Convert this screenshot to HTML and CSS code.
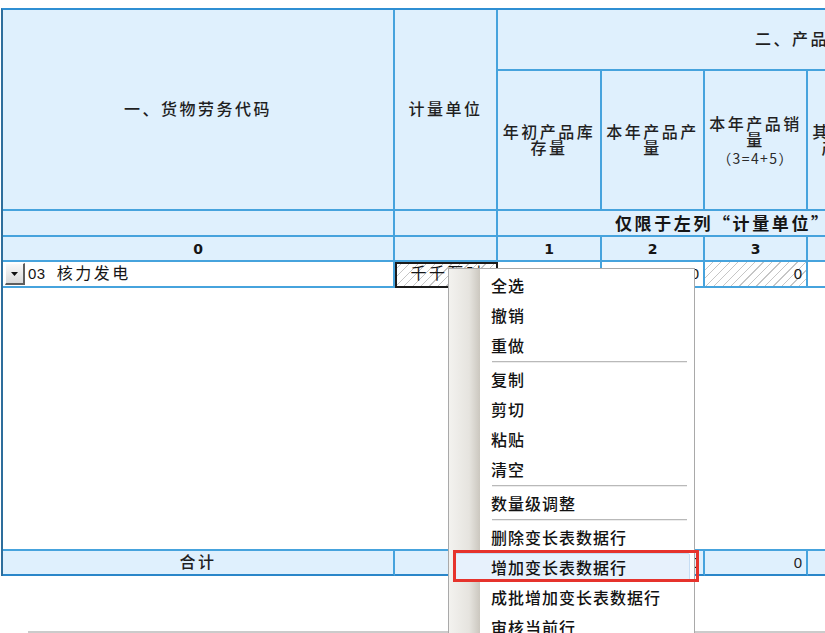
FILE: index.html
```html
<!DOCTYPE html>
<html lang="zh-CN">
<head>
<meta charset="utf-8">
<title>产品产销存情况</title>
<link rel="stylesheet" href="styles.css">
</head>
<body>
<div class="page">
  <div class="sheet">
    <div class="grid">
      <div class="cell hd span-r2 c1">一、货物劳务代码</div>
      <div class="cell hd span-r2 c2">计量单位</div>
      <div class="cell hd group">二、产品产销存情况</div>

      <div class="cell hd sub">年初产品库存量</div>
      <div class="cell hd sub">本年产品产量</div>
      <div class="cell hd sub">本年产品销量<span class="formula">（3=4+5）</span></div>
      <div class="cell hd sub">其中：出口产品销量</div>
      <div class="cell hd sub">年末产品库存量</div>

      <div class="cell hd"></div>
      <div class="cell hd"></div>
      <div class="cell hd note">仅限于左列“计量单位”为“千千瓦时”的填写</div>

      <div class="cell hd num">0</div>
      <div class="cell hd num"></div>
      <div class="cell hd num">1</div>
      <div class="cell hd num">2</div>
      <div class="cell hd num">3</div>
      <div class="cell hd num">4</div>
      <div class="cell hd num">5</div>

      <div class="cell data code">
        <span class="drop"><svg width="7" height="4" viewBox="0 0 7 4"><path d="M0 0H7L3.5 4Z" fill="#111"/></svg></span>
        <span class="code-no">03</span><span class="code-name">核力发电</span>
      </div>
      <div class="cell data hatch selected">千千瓦时</div>
      <div class="cell data val">0</div>
      <div class="cell data val">0</div>
      <div class="cell data val hatch">0</div>
      <div class="cell data val"></div>
      <div class="cell data val"></div>

      <div class="cell blank"></div>

      <div class="cell hd total">合计</div>
      <div class="cell hd total"></div>
      <div class="cell hd total val">0</div>
      <div class="cell hd total val">0</div>
      <div class="cell hd total val">0</div>
      <div class="cell hd total"></div>
      <div class="cell hd total"></div>
    </div>
  </div>
  <div class="foot"></div>

  <div class="menu">
    <div class="item">全选</div>
    <div class="item">撤销</div>
    <div class="item">重做</div>
    <div class="sep"></div>
    <div class="item">复制</div>
    <div class="item">剪切</div>
    <div class="item">粘贴</div>
    <div class="item">清空</div>
    <div class="sep"></div>
    <div class="item">数量级调整</div>
    <div class="sep"></div>
    <div class="item">删除变长表数据行</div>
    <div class="item hot">增加变长表数据行</div>
    <div class="item">成批增加变长表数据行</div>
    <div class="item">审核当前行</div>
  </div>
  <div class="mark"></div>
</div>
</body>
</html>
```

FILE: styles.css
```css
html, body {
  margin: 0;
  padding: 0;
  overflow: hidden;
  background: #ffffff;
}

.page {
  position: relative;
  width: 825px;
  height: 633px;
  overflow: hidden;
  font-family: "Liberation Sans", "Noto Sans CJK SC", sans-serif;
  color: #1e1e1e;
}

.sheet {
  padding-top: 8px;
  padding-left: 1px;
}

.grid {
  display: grid;
  grid-template-columns: 392px 103px 104px 103px 103px 103px 103px;
  grid-template-rows: 61px 140px 26px 25px 26px 263px 25px;
  width: max-content;
  border-top: 2px solid #2f8fd3;
  border-left: 2px solid #2e6e9c;
}

.cell {
  box-sizing: border-box;
  border-right: 2px solid #46a3dd;
  border-bottom: 2px solid #46a3dd;
  display: flex;
  align-items: center;
  justify-content: center;
  text-align: center;
  font-size: 16px;
  font-weight: 500;
  line-height: 16px;
  letter-spacing: 2.5px;
  overflow: hidden;
  white-space: nowrap;
}

.hd {
  background: #dff0fd;
  color: #1f1f1f;
}

.span-r2 {
  grid-row: span 2;
}

.group {
  grid-column: span 5;
  justify-content: flex-start;
  padding-left: 257px;
}

.sub {
  white-space: normal;
  flex-direction: column;
  padding: 2px 4px 0;
}

.formula {
  display: block;
  margin-top: 2px;
  font-family: "Noto Sans CJK SC", sans-serif;
  font-size: 14px;
  font-weight: normal;
  letter-spacing: 1.4px;
  line-height: 14px;
  color: #2a2a2a;
}

.note {
  grid-column: span 5;
  justify-content: flex-start;
  padding-left: 117px;
  font-family: "Noto Sans CJK SC", sans-serif;
  font-weight: bold;
  font-size: 17px;
  letter-spacing: 2.6px;
  color: #151515;
}

.num {
  font-family: "DejaVu Sans", "Noto Sans CJK SC", sans-serif;
  font-weight: bold;
  font-size: 14px;
  letter-spacing: 0;
  color: #151515;
}

.data {
  background: #ffffff;
  color: #151515;
}

.code {
  justify-content: flex-start;
  padding-left: 2px;
}

.drop {
  box-sizing: border-box;
  width: 20px;
  height: 22px;
  display: flex;
  align-items: center;
  justify-content: center;
  background: linear-gradient(#f9f9f9, #d9d9d9);
  border-top: 1px solid #ffffff;
  border-left: 1px solid #ffffff;
  border-right: 2px solid #5e5e5e;
  border-bottom: 2px solid #5e5e5e;
  margin-right: 3px;
}

.code-no {
  font-size: 15px;
  font-weight: normal;
  letter-spacing: 0.5px;
  margin-right: 11px;
}

.code-name {
  letter-spacing: 2.5px;
  font-weight: normal;
}

.hatch {
  background: #ffffff repeating-linear-gradient(135deg, #ffffff 0 5px, #c6c6c6 5px 6px);
}

.selected {
  outline: 2px solid #1b1b1b;
  outline-offset: -2px;
  padding-left: 4px;
  font-weight: normal;
}

.val {
  justify-content: flex-end;
  padding-right: 4px;
  font-size: 15px;
  font-weight: normal;
  letter-spacing: 0;
}

.blank {
  grid-column: span 7;
  background: #ffffff;
  border-right: none;
}

.total {
  border-bottom: 2px solid #2a86c9;
}

.foot {
  margin-top: 55px;
  margin-left: 28px;
  border-top: 2px solid #cbcbcb;
}

.menu {
  position: absolute;
  left: 448px;
  top: 268px;
  width: 247px;
  height: 400px;
  box-sizing: border-box;
  padding-top: 1px;
  border: 1px solid #a9a9a9;
  background: linear-gradient(to right, #f3f2ef 0, #e6e4df 20px, #cbc7bf 31px, #ffffff 31px) no-repeat;
  background-color: #ffffff;
  font-family: "Noto Sans CJK SC", sans-serif;
  font-size: 16px;
  font-weight: 500;
  letter-spacing: 1px;
  color: #121212;
}

.item {
  height: 30px;
  box-sizing: border-box;
  display: flex;
  align-items: center;
  padding-left: 42px;
  white-space: nowrap;
}

.item.hot {
  height: 28px;
  margin: 1px 4px 1px 6px;
  padding-left: 35px;
  border: 1px solid #c6ddf4;
  border-radius: 2px;
  background: #e7f1fc;
}

.sep {
  height: 0;
  margin: 1px 7px 1px 43px;
  border-top: 1px solid #b9b9b9;
  border-bottom: 1px solid #ececec;
}

.mark {
  position: absolute;
  left: 453px;
  top: 550px;
  width: 246px;
  height: 32px;
  box-sizing: border-box;
  border: 3px solid #e6332c;
}
```
